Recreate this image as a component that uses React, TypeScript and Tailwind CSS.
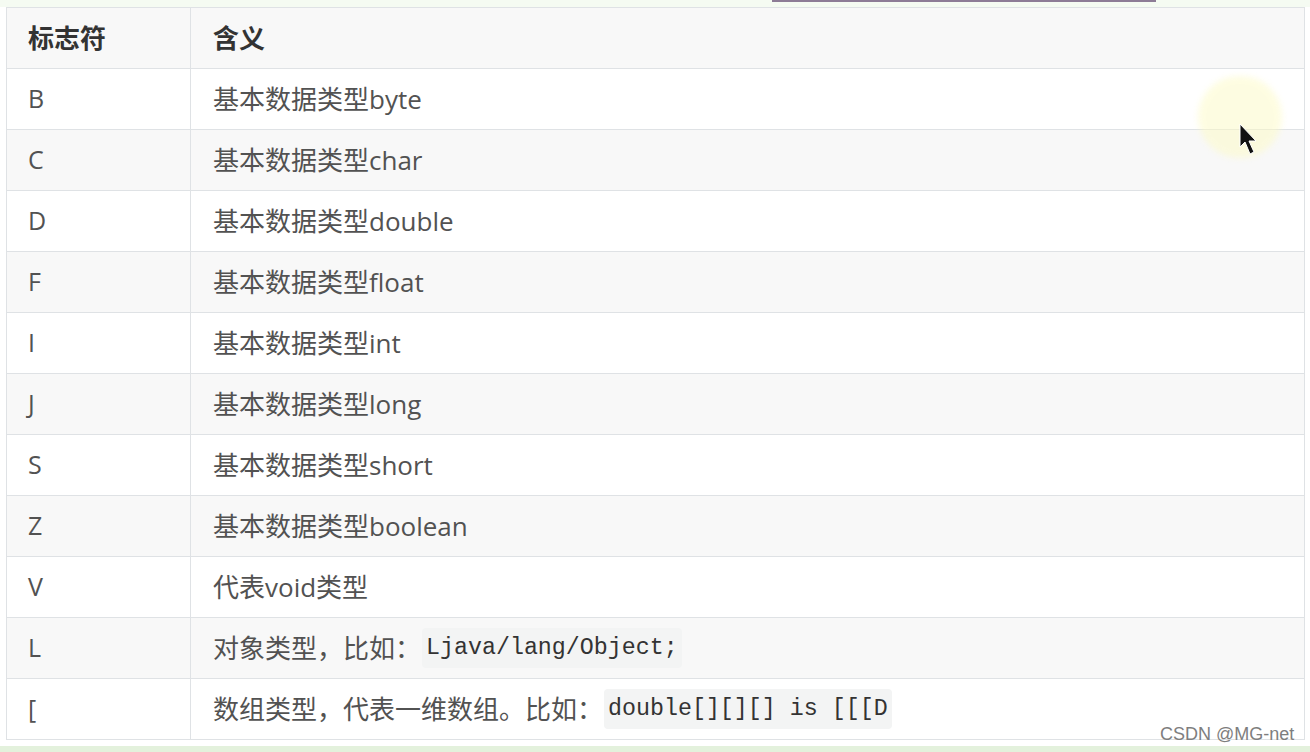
import React from "react";

type Row = { k: string; v: React.ReactNode };

const Code = ({ children }: { children: React.ReactNode }) => (
  <code className="ml-[1px] rounded-[4px] bg-[#f3f4f4] px-[4px] pb-[3px] pt-[3px] font-['Liberation_Mono',monospace] text-[23.3px] text-[#333]">
    {children}
  </code>
);

const rows: Row[] = [
  { k: "B", v: "基本数据类型byte" },
  { k: "C", v: "基本数据类型char" },
  { k: "D", v: "基本数据类型double" },
  { k: "F", v: "基本数据类型float" },
  { k: "I", v: "基本数据类型int" },
  { k: "J", v: "基本数据类型long" },
  { k: "S", v: "基本数据类型short" },
  { k: "Z", v: "基本数据类型boolean" },
  { k: "V", v: "代表void类型" },
  {
    k: "L",
    v: (
      <>
        对象类型，比如：<Code>Ljava/lang/Object;</Code>
      </>
    ),
  },
  {
    k: "[",
    v: (
      <>
        数组类型，代表一维数组。比如：<Code>double[][][] is [[[D</Code>
      </>
    ),
  },
];

export default function App() {
  return (
    <div className="relative h-[752px] w-[1310px] overflow-hidden bg-white font-['Open_Sans','Noto_Sans_CJK_SC',sans-serif]">
      <div className="h-[7px] bg-[#f5fbf2]">
        <div className="ml-[772px] h-[2px] w-[384px] bg-[#8d7c96]" />
      </div>
      <div className="ml-[6px] w-[1299px] border-l border-r border-t border-[#dfe2e5]">
        <div className="flex h-[61px] border-b border-[#dfe2e5] bg-[#f8f8f8] text-[26px] font-bold text-[#333]">
          <div className="flex w-[184px] items-center border-r border-[#dfe2e5] pl-[21px]">标志符</div>
          <div className="flex flex-1 items-center pl-[22px]">含义</div>
        </div>
        {rows.map((r, i) => (
          <div
            key={i}
            className={`flex h-[61px] border-b border-[#dfe2e5] text-[26px] text-[#525252] ${
              i % 2 === 1 ? "bg-[#f8f8f8]" : "bg-white"
            }`}
          >
            <div className="flex w-[184px] items-center border-r border-[#dfe2e5] pl-[21px] text-[25px]">{r.k}</div>
            <div className="flex flex-1 items-center whitespace-pre pl-[22px]">{r.v}</div>
          </div>
        ))}
      </div>
      <div className="mt-[6px] h-[6px] bg-[#e3f1dc]" />

      {/* cursor highlight */}
      <div className="pointer-events-none absolute left-[1198px] top-[76px] h-[82px] w-[84px] rounded-full bg-[#fdfbc4] opacity-50 blur-[3px]" />
      <svg className="absolute left-[1239px] top-[123px]" width="20" height="34" viewBox="0 0 20 34">
        <path d="M1 1 L1 24 L6 19 L11 31 L15 29 L10 18 L17 18 Z" fill="#111" stroke="#fff" strokeWidth="1" />
      </svg>

      <div className="absolute left-[1160px] top-[723px] font-['Liberation_Sans',sans-serif] text-[18px] leading-[22px] text-[#7e7e7e]">
        CSDN @MG-net
      </div>
    </div>
  );
}
